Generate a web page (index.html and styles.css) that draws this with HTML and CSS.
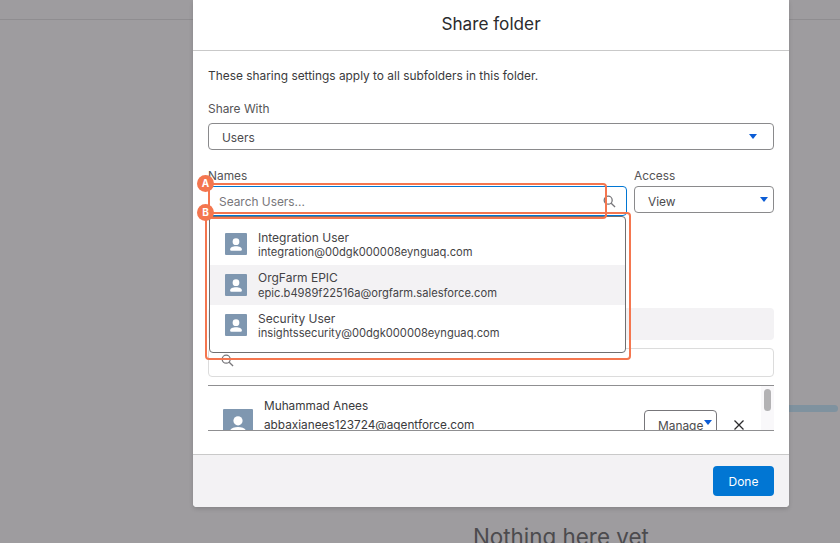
FILE: index.html
```html
<!DOCTYPE html>
<html lang="en">

<head>
    <meta charset="UTF-8" />
    <meta name="viewport" content="width=device-width, initial-scale=1.0" />
    <title>Share folder</title>
    <link rel="stylesheet" href="styles.css">
</head>

<body>
    <div class="backdrop">
        <div class="page-line"></div>
        <div class="empty-note">Nothing here yet</div>
        <div class="side-bar"></div>
    </div>

    <div class="modal">
        <div class="modal-header">
            <h2>Share folder</h2>
        </div>

        <div class="modal-body">
            <p class="intro">These sharing settings apply to all subfolders in this folder.</p>

            <label class="field-label">Share With</label>
            <div class="select share-select">
                <span>Users</span>
                <span class="caret"></span>
            </div>

            <div class="names-row">
                <div class="names-col">
                    <label class="field-label tight">Names</label>
                    <div class="search-box">
                        <span>Search Users...</span>
                        <svg class="search-icon" viewBox="0 0 14 14" width="13" height="13">
                            <circle cx="5.6" cy="5.6" r="4.3" />
                            <path d="M8.8 8.8 L13 13" />
                        </svg>
                    </div>
                </div>
                <div class="access-col">
                    <label class="field-label tight">Access</label>
                    <div class="select access-select">
                        <span>View</span>
                        <span class="caret"></span>
                    </div>
                </div>
            </div>

            <div class="behind">
                <div class="grey-strip"></div>
                <div class="filter-box">
                    <svg class="search-icon" viewBox="0 0 14 14" width="13" height="13">
                        <circle cx="5.6" cy="5.6" r="4.3" />
                        <path d="M8.8 8.8 L13 13" />
                    </svg>
                </div>
                <div class="shared-list">
                    <div class="shared-row">
                        <div class="avatar large">
                            <svg viewBox="0 0 28 28"><circle cx="14" cy="11" r="4.3" /><path d="M6.5 21 C6.5 18 10 16.8 14 16.8 C18 16.8 21.5 18 21.5 21 C21.5 22 21 22.5 20 22.5 L8 22.5 C7 22.5 6.5 22 6.5 21 Z" /></svg>
                        </div>
                        <div class="shared-text">
                            <div>Muhammad Anees</div>
                            <div>abbaxianees123724@agentforce.com</div>
                        </div>
                        <div class="manage">Manage<span class="caret"></span></div>
                        <svg class="close-x" viewBox="0 0 10 10" width="10" height="10"><path d="M0.5 0.5 L9.5 9.5 M9.5 0.5 L0.5 9.5" /></svg>
                    </div>
                    <div class="scroll-track"><div class="scroll-thumb"></div></div>
                </div>
            </div>

            <!-- dropdown sits over the list behind it -->
            <div class="dropdown">
                <div class="user-row">
                    <div class="avatar"><svg viewBox="0 0 28 28"><circle cx="14" cy="11" r="4.3" /><path d="M6.5 21 C6.5 18 10 16.8 14 16.8 C18 16.8 21.5 18 21.5 21 C21.5 22 21 22.5 20 22.5 L8 22.5 C7 22.5 6.5 22 6.5 21 Z" /></svg></div>
                    <div class="user-text">
                        <div>Integration User</div>
                        <div class="user-mail">integration@00dgk000008eynguaq.com</div>
                    </div>
                </div>
                <div class="user-row active">
                    <div class="avatar"><svg viewBox="0 0 28 28"><circle cx="14" cy="11" r="4.3" /><path d="M6.5 21 C6.5 18 10 16.8 14 16.8 C18 16.8 21.5 18 21.5 21 C21.5 22 21 22.5 20 22.5 L8 22.5 C7 22.5 6.5 22 6.5 21 Z" /></svg></div>
                    <div class="user-text">
                        <div>OrgFarm EPIC</div>
                        <div class="user-mail">epic.b4989f22516a@orgfarm.salesforce.com</div>
                    </div>
                </div>
                <div class="user-row">
                    <div class="avatar"><svg viewBox="0 0 28 28"><circle cx="14" cy="11" r="4.3" /><path d="M6.5 21 C6.5 18 10 16.8 14 16.8 C18 16.8 21.5 18 21.5 21 C21.5 22 21 22.5 20 22.5 L8 22.5 C7 22.5 6.5 22 6.5 21 Z" /></svg></div>
                    <div class="user-text">
                        <div>Security User</div>
                        <div class="user-mail">insightssecurity@00dgk000008eynguaq.com</div>
                    </div>
                </div>
            </div>

            <div class="callout callout-a"></div>
            <div class="callout callout-b"></div>
            <div class="marker marker-a">A</div>
            <div class="marker marker-b">B</div>
        </div>

        <div class="modal-footer">
            <button class="done-btn">Done</button>
        </div>
    </div>
</body>

</html>
```

FILE: styles.css
```css
html,
body {
    height: 100%;
}

body {
    font-family: Inter, 'Liberation Sans', sans-serif;
    background-color: #9e9c9f;
    color: #3a3a3c;
    margin: 0;
    padding: 0;
    overflow: hidden;
    position: relative;
}

.backdrop {
    position: absolute;
    inset: 0;
}

.page-line {
    position: absolute;
    top: 19px;
    left: 0;
    right: 0;
    height: 1px;
    background-color: #8f8d90;
}

.empty-note {
    position: absolute;
    top: 523px;
    left: 473px;
    font-size: 22.4px;
    color: #4c4b4e;
    white-space: nowrap;
}

.side-bar {
    position: absolute;
    top: 405px;
    left: 780px;
    width: 58px;
    height: 7px;
    border-radius: 4px;
    background-color: #7f929f;
}

.modal {
    position: relative;
    width: 596px;
    height: 507px;
    margin-left: 193px;
    display: flex;
    flex-direction: column;
    background-color: white;
    border-radius: 0 0 4px 4px;
    box-shadow: 0 2px 4px rgba(0, 0, 0, 0.15);
}

.modal-header {
    height: 47px;
    padding-bottom: 3px;
    display: flex;
    align-items: center;
    justify-content: center;
    border-bottom: 1px solid #c9c9c9;
}

.modal-header h2 {
    margin: 0;
    font-size: 17.2px;
    font-weight: 400;
    color: #2b2b2d;
}

.modal-body {
    position: relative;
    flex: 1;
    padding: 17px 15px 0;
    font-size: 11.9px;
}

.intro {
    margin: 0 0 18px;
    line-height: 15px;
    color: #3a3a3c;
}

.field-label {
    display: block;
    line-height: 15px;
    margin-bottom: 7px;
    color: #555456;
}

.field-label.tight {
    margin-bottom: 3px;
}

.select {
    position: relative;
    display: flex;
    align-items: center;
    justify-content: space-between;
    border: 1px solid #8a8a8c;
    border-radius: 4px;
    background-color: white;
    color: #4c4b4e;
}

.share-select {
    height: 23px;
    padding: 2px 16px 0 13px;
}

.share-select .caret {
    margin-top: -3px;
}

.access-select {
    height: 21px;
    margin-top: 1px;
    padding: 4px 5px 0 13px;
}

.access-select .caret {
    margin-top: -5px;
}

.caret {
    width: 0;
    height: 0;
    border-left: 4px solid transparent;
    border-right: 4px solid transparent;
    border-top: 5px solid #0b5cd5;
}

.names-row {
    display: flex;
    gap: 7px;
    margin-top: 18px;
}

.names-col {
    width: 419px;
}

.access-col {
    flex: 1;
}

.search-box {
    height: 28px;
    display: flex;
    align-items: center;
    justify-content: space-between;
    padding: 0 10px 0 10px;
    border: 1px solid #0176d3;
    border-radius: 4px;
    color: #77767a;
}

.search-icon {
    fill: none;
    stroke: #77767a;
    stroke-width: 1.4;
}

.behind {
    position: absolute;
    top: 257px;
    left: 15px;
    right: 15px;
}

.grey-strip {
    height: 32px;
    border-radius: 4px;
    background-color: #f3f2f4;
}

.filter-box {
    height: 27px;
    margin-top: 8px;
    display: flex;
    align-items: center;
    padding: 0 12px;
    border: 1px solid #dcdcdc;
    border-radius: 4px;
}

.filter-box .search-icon {
    margin-top: -5px;
}

.shared-list {
    position: relative;
    height: 44px;
    margin-top: 8px;
    overflow: hidden;
    border-top: 1px solid #8f8f91;
    border-bottom: 1px solid #8f8f91;
    display: flex;
}

.shared-row {
    flex: 1;
    display: flex;
    align-items: flex-start;
    padding: 11px 0 0 15px;
}

.shared-text {
    flex: 1;
    margin-left: 11px;
    line-height: 19px;
    font-size: 11.8px;
    color: #3a3a3c;
}

.manage {
    display: flex;
    align-items: center;
    height: 30px;
    width: 73px;
    box-sizing: border-box;
    margin-top: 13px;
    padding: 0 0 0 13px;
    border: 1px solid #77767a;
    border-radius: 4px;
    color: #4c4b4e;
}

.manage .caret {
    margin: -5px 0 0 1px;
}

.close-x {
    margin: 23px 17px 0 17px;
    fill: none;
    stroke: #2b2b2d;
    stroke-width: 1.3;
}

.scroll-track {
    width: 13px;
    background-color: #f9f8fa;
    flex-shrink: 0;
}

.scroll-thumb {
    width: 7px;
    height: 22px;
    margin: 3px 0 0 3px;
    border-radius: 4px;
    background-color: #b3b2b4;
}

.avatar {
    width: 22px;
    height: 22px;
    flex-shrink: 0;
    background-color: #7f97b0;
    border-radius: 1px;
    overflow: hidden;
}

.avatar.large {
    width: 30px;
    height: 30px;
    margin-top: 12px;
}

.avatar svg {
    display: block;
    width: 100%;
    height: 100%;
    fill: white;
}

.dropdown {
    position: absolute;
    top: 165px;
    left: 16px;
    width: 417px;
    height: 137px;
    padding-top: 7px;
    box-sizing: border-box;
    background-color: white;
    border: 1px solid #6f6f71;
    border-radius: 4px;
}

.user-row {
    height: 40.5px;
    display: flex;
    align-items: center;
    padding-left: 15px;
    gap: 11px;
}

.user-row.active {
    background-color: #f3f2f4;
}

.user-text {
    padding-top: 2px;
    line-height: 15.5px;
    font-size: 12px;
    color: #444346;
}

.user-mail {
    font-size: 11.15px;
}

.callout {
    position: absolute;
    border: 2px solid #f4764f;
    border-radius: 4px;
}

.callout-a {
    top: 132px;
    left: 15px;
    width: 395px;
    height: 32px;
}

.callout-b {
    top: 161px;
    left: 12px;
    width: 422px;
    height: 144px;
}

.marker {
    position: absolute;
    left: 4px;
    width: 17px;
    height: 17px;
    border-radius: 50%;
    background-color: #f4764f;
    color: white;
    font-size: 10px;
    font-weight: 700;
    line-height: 17px;
    text-align: center;
}

.marker-a {
    top: 124px;
}

.marker-b {
    top: 153px;
}

.modal-footer {
    height: 52px;
    display: flex;
    align-items: center;
    justify-content: flex-end;
    padding: 0 15px;
    background-color: #f3f2f4;
    border-top: 1px solid #c9c9c9;
    border-radius: 0 0 4px 4px;
}

.done-btn {
    width: 61px;
    height: 30px;
    font-family: inherit;
    font-size: 12px;
    color: white;
    background-color: #0176d3;
    border: none;
    border-radius: 4px;
}
```
